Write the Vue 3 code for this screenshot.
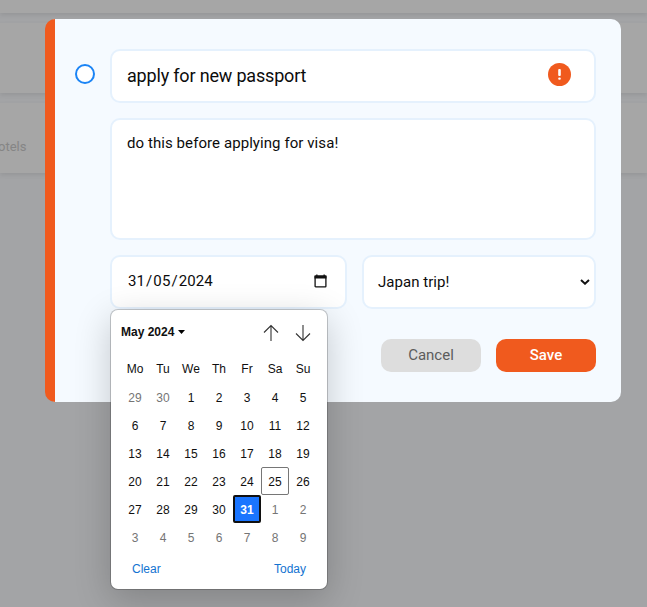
<script setup>
import { ref } from 'vue'

const title = ref('apply for new passport')
const notes = ref('do this before applying for visa!')
const weekdays = ['Mo', 'Tu', 'We', 'Th', 'Fr', 'Sa', 'Su']
const days = Array.from({ length: 42 }, (_, i) => {
  const n = i - 1
  if (n < 1) return { label: n + 30, outside: true }
  if (n > 31) return { label: n - 31, outside: true }
  return { label: n, selected: n === 31, today: n === 25 }
})
</script>

<template>
  <div class="page">
    <div class="list">
      <div class="row first"></div>
      <div class="row"></div>
      <div class="row"><span class="tag">otels</span></div>
    </div>
    <div class="overlay">
      <form class="modal" @submit.prevent>
        <span class="check"></span>
        <div class="fields">
          <div class="field title-field">
            <input v-model="title" class="title-input" type="text" spellcheck="false" />
            <svg class="priority" viewBox="0 0 23 23">
              <circle cx="11.5" cy="11.5" r="11.5" fill="#f05a1e" />
              <rect x="10.2" y="6" width="2.6" height="7" rx="1" fill="#fff" />
              <rect x="10.2" y="14.5" width="2.6" height="2.3" rx="1" fill="#fff" />
            </svg>
          </div>
          <textarea v-model="notes" class="field notes" spellcheck="false"></textarea>
          <div class="pair">
            <div class="field date">
              <span class="date-value"><span>31</span><i>/</i><span>05</span><i>/</i><span>2024</span></span>
              <svg class="date-icon" viewBox="0 0 13 14">
                <path d="M1.7 2.2h9.6a.6.6 0 0 1 .6.6v9.4a.6.6 0 0 1-.6.6H1.7a.6.6 0 0 1-.6-.6V2.8a.6.6 0 0 1 .6-.6z" fill="none" stroke="#111" stroke-width="1.3" />
                <path d="M.5 1.6h12V4.6H.5zM2.2.4h1.3v2H2.2zM9.5.4h1.3v2H9.5z" fill="#111" />
              </svg>
              <div class="calendar">
                <div class="cal-head">
                  <span class="month">May 2024</span>
                  <svg class="caret" viewBox="0 0 7 4"><path d="M0 0h7L3.5 4z" /></svg>
                  <svg class="arrow up" viewBox="0 0 16 18"><path d="M8 17V1.5M1 8.5l7-7 7 7" /></svg>
                  <svg class="arrow" viewBox="0 0 16 18"><path d="M8 1v15.5M1 9.5l7 7 7-7" /></svg>
                </div>
                <div class="grid weekdays"><span v-for="d in weekdays" :key="d">{{ d }}</span></div>
                <div class="grid days">
                  <span
                    v-for="(d, i) in days"
                    :key="i"
                    :class="{ outside: d.outside, selected: d.selected, today: d.today }"
                  >{{ d.label }}</span>
                </div>
                <div class="cal-foot"><span>Clear</span><span>Today</span></div>
              </div>
            </div>
            <div class="field project">
              <span>Japan trip!</span>
              <svg class="chevron" viewBox="0 0 10 6"><path d="M1 1l4 3.7L9 1" /></svg>
            </div>
          </div>
          <div class="actions">
            <button class="btn cancel" type="button">Cancel</button>
            <button class="btn save" type="submit">Save</button>
          </div>
        </div>
      </form>
    </div>
  </div>
</template>

<style>
body {
  margin: 0;
  overflow: hidden;
}
</style>

<style scoped>
.page,
.page * {
  box-sizing: border-box;
}
.page {
  position: relative;
  height: 607px;
  overflow: hidden;
  background: #a3a4a6;
  font-family: Roboto, sans-serif;
}
.list {
  display: flex;
  flex-direction: column;
  gap: 10px;
}
.row {
  height: 70px;
  background: #a6a6a6;
  box-shadow: 0 2px 5px rgba(0, 0, 0, 0.09);
}
.row.first {
  height: 13px;
}
.tag {
  display: block;
  margin-left: -2px;
  padding-top: 36px;
  font-size: 13px;
  line-height: 16px;
  color: #858585;
}
.overlay {
  position: absolute;
  inset: 0;
  padding: 19px 26px 0 45px;
}
.modal {
  display: flex;
  width: 576px;
  height: 383px;
  padding: 30px 25px 30px 20px;
  border-left: 10px solid #f05a1e;
  border-radius: 10px;
  background: #f5faff;
}
.check {
  flex: none;
  width: 20px;
  height: 20px;
  margin: 15px 15px 0 0;
  border: 2px solid #1b84f5;
  border-radius: 50%;
  background: #fff;
}
.fields {
  flex: 1;
}
.field {
  border: 2px solid #e5f1fd;
  border-radius: 10px;
  background: #fff;
  color: #0c0c0c;
}
.title-field {
  display: flex;
  align-items: center;
  height: 54px;
  padding: 0 23px 2px 15px;
}
.title-input {
  flex: 1;
  min-width: 0;
  height: 30px;
  padding: 0;
  border: 0;
  outline: 0;
  background: transparent;
  color: inherit;
  font: 18px Roboto, sans-serif;
  letter-spacing: -0.18px;
}
.priority {
  width: 23px;
  height: 23px;
  margin-top: -1px;
}
.notes {
  display: block;
  width: 100%;
  height: 122px;
  margin: 15px 0;
  padding: 13px 15px;
  outline: 0;
  resize: none;
  font: 15px/20px Roboto, sans-serif;
  letter-spacing: 0.075px;
}
.pair {
  display: grid;
  grid-template-columns: 237px 234px;
  gap: 15px;
}
.date,
.project {
  display: flex;
  align-items: center;
  justify-content: space-between;
  height: 54px;
  font-size: 15px;
}
.date {
  position: relative;
  padding: 0 18px 3px 16px;
}
.date-value {
  display: flex;
  letter-spacing: 0.1px;
}
.date-value i {
  margin: 0 1px;
  font-style: normal;
}
.date-icon {
  width: 13px;
  height: 14px;
}
.project {
  padding: 0 4px 0 14px;
  letter-spacing: 0.04px;
}
.chevron {
  width: 10px;
  height: 6px;
  fill: none;
  stroke: #111;
  stroke-width: 2;
}
.actions {
  display: flex;
  justify-content: flex-end;
  gap: 15px;
  margin-top: 30px;
}
.btn {
  width: 100px;
  height: 33px;
  padding: 0 0 2px;
  border: 0;
  border-radius: 10px;
  font: 15px Roboto, sans-serif;
}
.cancel {
  background: #ddd;
  color: #5c5c5c;
}
.save {
  background: #f05a1e;
  color: #fff;
  font-weight: 500;
}
.calendar {
  position: absolute;
  z-index: 2;
  top: 52px;
  left: -2px;
  width: 218px;
  height: 281px;
  padding: 8px 10px;
  border: 1px solid rgba(0, 0, 0, 0.2);
  border-radius: 8px;
  background: #fff;
  background-clip: padding-box;
  box-shadow: 0 10px 36px rgba(0, 0, 0, 0.2);
  font: 12px "Liberation Sans", sans-serif;
  color: #101010;
}
.cal-head {
  display: flex;
  align-items: center;
  height: 27px;
}
.month {
  font-weight: 700;
}
.caret {
  width: 7px;
  height: 4px;
  margin-left: 4px;
}
.arrow {
  width: 16px;
  height: 18px;
  margin: 2px 6px 0 0;
  fill: none;
  stroke: #333;
  stroke-width: 1.1;
}
.arrow.up {
  margin: 2px 16px 0 auto;
}
.grid {
  display: grid;
  grid-template-columns: repeat(7, 28px);
  grid-auto-rows: 28px;
}
.grid span {
  display: flex;
  align-items: center;
  justify-content: center;
}
.weekdays {
  height: 28px;
  margin-top: 10px;
}
.days span {
  padding-top: 2px;
}
.grid .outside {
  color: #757575;
}
.grid .today {
  border: 1px solid #767676;
  border-radius: 2px;
}
.grid .selected {
  border: 2px solid #101010;
  border-radius: 2px;
  background: #1a75ff;
  color: #fff;
  font-weight: 700;
}
.cal-foot {
  display: flex;
  justify-content: space-between;
  padding: 11px 11px 0;
  color: #1373d1;
}
</style>
